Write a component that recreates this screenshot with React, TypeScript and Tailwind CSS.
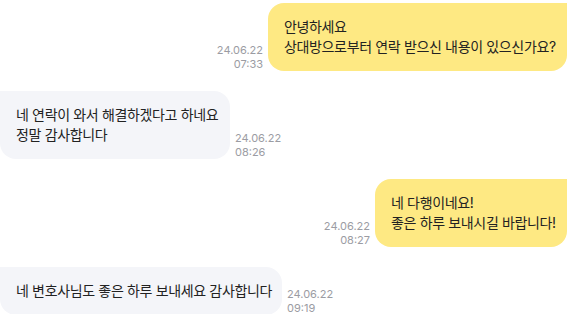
import React from 'react'

type Msg = { mine: boolean; lines: string[]; date: string; time: string; w: string }

const messages: Msg[] = [
  { mine: true, lines: ['안녕하세요', '상대방으로부터 연락 받으신 내용이 있으신가요?'], date: '24.06.22', time: '07:33', w: 'w-[299px]' },
  { mine: false, lines: ['네 연락이 와서 해결하겠다고 하네요', '정말 감사합니다'], date: '24.06.22', time: '08:26', w: 'w-[230px]' },
  { mine: true, lines: ['네 다행이네요!', '좋은 하루 보내시길 바랍니다!'], date: '24.06.22', time: '08:27', w: 'w-[192px]' },
  { mine: false, lines: ['네 변호사님도 좋은 하루 보내세요 감사합니다'], date: '24.06.22', time: '09:19', w: 'w-[282px]' },
]

const Stamp = ({ m }: { m: Msg }) => (
  <div className={'text-[11px] leading-[14px] text-[#9b9ca3] ' + (m.mine ? 'text-right' : 'text-left')}>
    <p>{m.date}</p>
    <p>{m.time}</p>
  </div>
)

const Bubble = ({ m }: { m: Msg }) => (
  <div
    className={
      m.w +
      ' py-[14px] pl-4 pr-1 text-[14px] leading-[20px] tracking-[-0.025em] text-[#222] whitespace-nowrap ' +
      (m.mine ? 'bg-[#fee983] rounded-2xl rounded-tr-none' : 'bg-[#f4f5f9] rounded-2xl rounded-tl-none')
    }
  >
    {m.lines.map((l) => (
      <p key={l}>{l}</p>
    ))}
  </div>
)

const App = () => {
  return (
    <div className="w-[570px] h-[314px] overflow-hidden bg-white pt-[3px] pr-[3px] flex flex-col gap-5 font-['Inter','Noto_Sans_CJK_KR',sans-serif]">
      {messages.map((m) =>
        m.mine ? (
          <div key={m.time} className="flex justify-end items-end gap-[5px]">
            <Stamp m={m} />
            <Bubble m={m} />
          </div>
        ) : (
          <div key={m.time} className="flex justify-start items-end gap-[5px]">
            <Bubble m={m} />
            <Stamp m={m} />
          </div>
        )
      )}
    </div>
  )
}

export default App
